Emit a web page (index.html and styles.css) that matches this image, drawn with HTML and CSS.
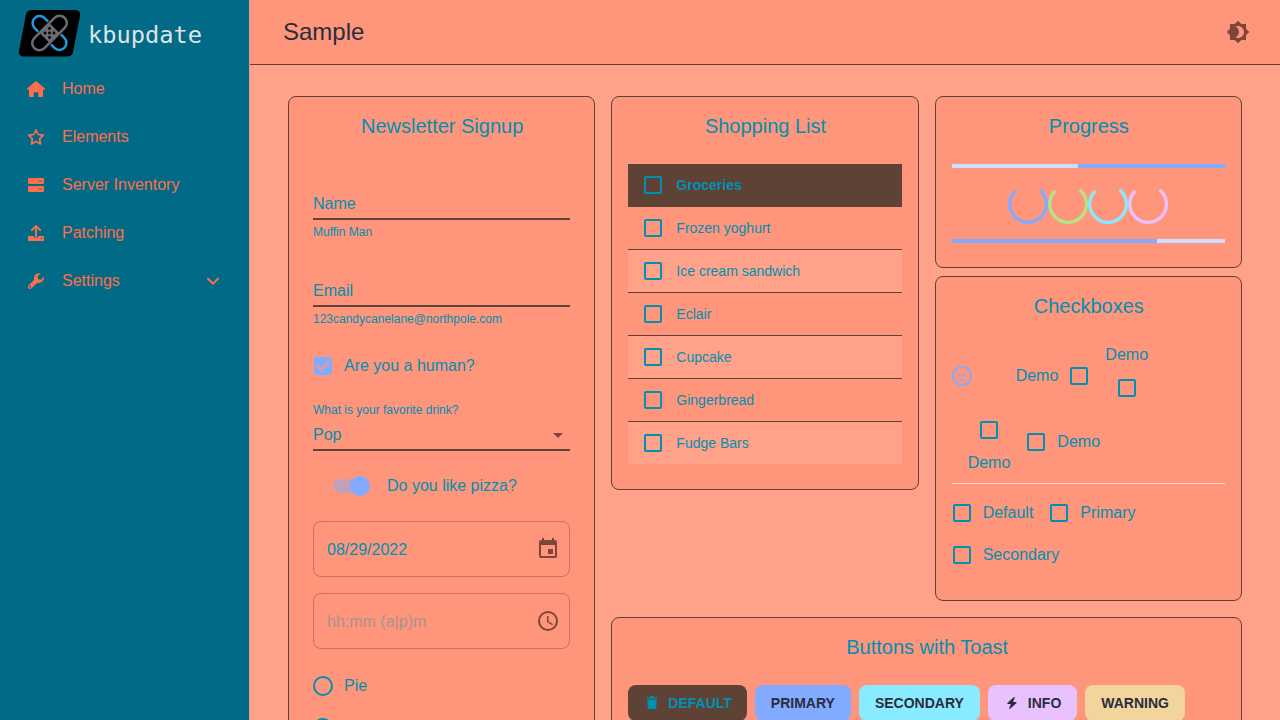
FILE: index.html
```html
<!DOCTYPE html>
<html lang="en">
<head>
<meta charset="utf-8">
<title>kbupdate</title>
<link rel="stylesheet" href="styles.css">
</head>
<body>
<svg class="defs" width="0" height="0">
  <symbol id="box" viewBox="0 0 24 24"><path d="M19 5v14H5V5h14m0-2H5c-1.1 0-2 .9-2 2v14c0 1.1.9 2 2 2h14c1.1 0 2-.9 2-2V5c0-1.1-.9-2-2-2z"/></symbol>
  <symbol id="ring" viewBox="0 0 24 24"><circle cx="12" cy="12" r="9" fill="none" stroke="currentColor" stroke-width="2"/></symbol>
  <symbol id="spin" viewBox="0 0 44 44"><path d="M34.800 6.300A20.200 20.200 0 1 1 8 7.500" fill="none" stroke="currentColor" stroke-width="3.600"/></symbol>
</svg>
<div class="app">
  <aside class="sidebar">
    <div class="brand">
      <svg class="brand-mark" width="65" height="50" viewBox="0 0 65 50">
        <path d="M14.500 2H58q6 0 5 6l-7 36q-1 4.500-6 4.500H7q-6 0-5-6L9 6.500Q10 2 14.500 2z" fill="#000"/>
        <g fill="none" stroke-width="2.500">
          <g transform="rotate(45 32.500 25)" stroke="#2299dc">
            <path d="M23.500 18h-5a7 7 0 0 0 0 14h5M41.500 18h5a7 7 0 0 1 0 14h-5"/>
          </g>
          <g transform="rotate(-45 32.500 25)" stroke="#6c6b71">
            <rect x="11" y="17.800" width="43" height="14.400" rx="7.200" fill="#000"/>
            <rect x="25.500" y="18" width="14" height="14" fill="#6c6b71" stroke="none"/>
          </g>
        </g>
        <g fill="#000"><circle cx="32.500" cy="20.500" r="1.400"/><circle cx="28" cy="25" r="1.400"/><circle cx="32.500" cy="25" r="1.400"/><circle cx="37" cy="25" r="1.400"/><circle cx="32.500" cy="29.500" r="1.400"/></g>
      </svg>
      <span class="brand-name">kbupdate</span>
    </div>
    <nav class="nav">
      <a class="nav-item"><svg viewBox="0 0 20 20"><path d="M10 2 1 9.500Q.8 10.800 2 10.800H3V17q0 1 1 1h3.700v-3.700q0-1 1-1h2.600q1 0 1 1V18H16q1 0 1-1v-6.200h1q1.200 0 1-1.300z"/></svg><span>Home</span></a>
      <a class="nav-item"><svg viewBox="0 0 20 20"><path d="M10 3 12.200 7.500 17.300 8.200 13.600 11.800 14.500 17 10 14.500 5.500 17 6.400 11.800 2.700 8.200 7.800 7.500z" fill="none" stroke="currentColor" stroke-width="1.700" stroke-linejoin="round"/></svg><span>Elements</span></a>
      <a class="nav-item"><svg viewBox="0 0 20 20"><rect x="2" y="3" width="16" height="6" rx="1"/><rect x="2" y="11" width="16" height="6" rx="1"/><path d="M12 5h4v2h-4zM12 13h4v2h-4z" fill="#a86f62"/></svg><span>Server Inventory</span></a>
      <a class="nav-item"><svg viewBox="0 0 20 20"><path d="M3 13h4.500q.5 2 2.500 2t2.500-2H17q1 0 1 1v3q0 1-1 1H3q-1 0-1-1v-3q0-1 1-1z"/><path d="M10 13.500V3.500M5.800 7.200 10 3l4.200 4.200" fill="none" stroke="currentColor" stroke-width="1.900" stroke-linecap="round"/><circle cx="15.500" cy="15.500" r=".8" fill="#006a87"/></svg><span>Patching</span></a>
      <a class="nav-item"><svg viewBox="0 0 20 20"><path d="M17.700 5.800 14.800 8.700 12.200 8.200 11.500 5.300 14.500 2.400C12 1.500 8.600 3 8 6.500c-.1.900 0 1.600.2 2.200L2.700 14.200c-1 1-.9 2.300-.2 3.100.9.900 2.300.9 3.200 0l5.600-5.600C15 12.800 19 9.500 17.700 5.800zM4 16.600a.9.900 0 1 1 0-1.800.9.900 0 0 1 0 1.800z"/></svg><span>Settings</span>
        <svg class="chevron" viewBox="0 0 14 14"><path d="M2 4.800 7 9.600 12 4.800" fill="none" stroke="currentColor" stroke-width="2" stroke-linecap="round"/></svg></a>
    </nav>
  </aside>
  <div class="content">
    <header class="topbar">
      <h1>Sample</h1>
      <svg class="icon brown" viewBox="0 0 24 24"><path d="M20 8.690V4h-4.690L12 .69 8.690 4H4v4.690L.69 12 4 15.310V20h4.690L12 23.310 15.310 20H20v-4.690L23.310 12 20 8.690zM12 18c-.89 0-1.740-.2-2.500-.55C11.560 16.500 13 14.420 13 12s-1.440-4.500-3.500-5.450C10.260 6.200 11.110 6 12 6c3.310 0 6 2.690 6 6s-2.690 6-6 6z"/></svg>
    </header>
    <main class="board">
      <section class="card form">
        <h2>Newsletter Signup</h2>
        <div class="field"><div class="input">Name</div><div class="hint">Muffin Man</div></div>
        <div class="field second"><div class="input">Email</div><div class="hint">123candycanelane@northpole.com</div></div>
        <label class="check human"><span class="tick blue"><svg class="icon" viewBox="0 0 24 24"><path d="M19 3H5c-1.110 0-2 .9-2 2v14c0 1.100.89 2 2 2h14c1.110 0 2-.9 2-2V5c0-1.100-.89-2-2-2zm-9 14l-5-5 1.410-1.410L10 14.170l7.590-7.590L19 8l-9 9z"/></svg></span>Are you a human?</label>
        <div class="select">
          <div class="hint">What is your favorite drink?</div>
          <div class="input">Pop<svg class="icon brown" viewBox="0 0 24 24"><path d="M7 10l5 5 5-5z"/></svg></div>
        </div>
        <label class="pizza"><span class="switch"><span class="thumb"></span></span>Do you like pizza?</label>
        <div class="picker"><span>08/29/2022</span><svg class="icon brown" viewBox="0 0 24 24"><path d="M17 12h-5v5h5v-5zM16 1v2H8V1H6v2H5c-1.110 0-1.990.9-1.990 2L3 19c0 1.100.89 2 2 2h14c1.100 0 2-.9 2-2V5c0-1.100-.9-2-2-2h-1V1h-2zm3 18H5V8h14v11z"/></svg></div>
        <div class="picker"><span class="placeholder">hh:mm (a|p)m</span><svg class="icon brown" viewBox="0 0 24 24"><circle cx="12" cy="12" r="9" fill="none" stroke="currentColor" stroke-width="2"/><path d="M12.500 7H11v6l5.250 3.150.75-1.230-4.500-2.670z"/></svg></div>
        <div class="radios">
          <label class="check"><span class="tick"><svg class="icon"><use href="#ring"/></svg></span>Pie</label>
          <label class="check"><span class="tick"><svg class="icon"><use href="#ring"/></svg></span></label>
        </div>
      </section>
      <div class="right">
        <div class="pair">
          <section class="card list">
            <h2>Shopping List</h2>
            <div class="table">
              <div class="row head"><svg class="icon"><use href="#box"/></svg>Groceries</div>
              <div class="row"><svg class="icon"><use href="#box"/></svg>Frozen yoghurt</div>
              <div class="row"><svg class="icon"><use href="#box"/></svg>Ice cream sandwich</div>
              <div class="row"><svg class="icon"><use href="#box"/></svg>Eclair</div>
              <div class="row"><svg class="icon"><use href="#box"/></svg>Cupcake</div>
              <div class="row"><svg class="icon"><use href="#box"/></svg>Gingerbread</div>
              <div class="row"><svg class="icon"><use href="#box"/></svg>Fudge Bars</div>
            </div>
          </section>
          <div class="stack">
            <section class="card progress">
              <h2>Progress</h2>
              <div class="bar reverse"><span style="width:53.800%"></span></div>
              <div class="spinners">
                <svg class="blue"><use href="#spin"/></svg><svg class="green"><use href="#spin"/></svg><svg class="cyan"><use href="#spin"/></svg><svg class="pink"><use href="#spin"/></svg>
              </div>
              <div class="bar"><span style="width:75%"></span></div>
            </section>
            <section class="card boxes">
              <h2>Checkboxes</h2>
              <div class="placements">
                <span class="tick face blue"><svg class="icon" viewBox="0 0 24 24"><circle cx="12" cy="12" r="9.200" fill="none" stroke="currentColor" stroke-width="1.800"/><path d="M7.200 9 11.500 11 10.800 12.200Q8.600 13.200 8.300 10.800zM16.800 9 12.500 11 13.200 12.200Q15.400 13.200 15.700 10.800z"/><path d="M9.200 17.200q2.800-2.500 5.600 0" fill="none" stroke="currentColor" stroke-width="1.600"/></svg></span>
                <label class="check start">Demo<span class="tick"><svg class="icon"><use href="#box"/></svg></span></label>
                <label class="check vertical">Demo<span class="tick"><svg class="icon"><use href="#box"/></svg></span></label>
              </div>
              <div class="placements">
                <label class="check vertical"><span class="tick"><svg class="icon"><use href="#box"/></svg></span>Demo</label>
                <label class="check"><span class="tick"><svg class="icon"><use href="#box"/></svg></span>Demo</label>
              </div>
              <hr>
              <div class="placements wrap">
                <label class="check"><span class="tick"><svg class="icon"><use href="#box"/></svg></span>Default</label>
                <label class="check"><span class="tick"><svg class="icon"><use href="#box"/></svg></span>Primary</label>
                <label class="check"><span class="tick"><svg class="icon"><use href="#box"/></svg></span>Secondary</label>
              </div>
            </section>
          </div>
        </div>
        <section class="card toast">
          <h2>Buttons with Toast</h2>
          <div class="buttons">
            <button class="btn default"><svg viewBox="0 0 16 16"><path d="M2.500 2.200h3.300L6.500 1h3l.7 1.200h3.300v1.300h-11zM3.200 4.500h9.600L12.200 13q-.1 1-1.200 1H5q-1.100 0-1.200-1z"/></svg>DEFAULT</button>
            <button class="btn primary">PRIMARY</button>
            <button class="btn secondary">SECONDARY</button>
            <button class="btn info"><svg viewBox="0 0 16 16"><path d="M10 2 3.300 8Q3 8.800 3.800 8.900H6.800l-1.700 4.600q.3.800 1 .3L12.500 8q.3-.8-.5-.9H9.100l1.700-4.600Q10.700 1.800 10 2z"/></svg>INFO</button>
            <button class="btn warning">WARNING</button>
          </div>
        </section>
      </div>
    </main>
  </div>
</div>
</body>
</html>
```

FILE: styles.css
```css
* { box-sizing: border-box; }
body {
  margin: 0;
  font: 300 16px/24px "Liberation Sans", Arial, sans-serif;
  color: #0090b3;
  background: #ffa289;
}
.defs { display: none; }
svg { fill: currentColor; flex: none; }
.icon { width: 24px; height: 24px; display: block; }
.brown { color: #7b4838; }
.blue { color: #82aaff; }
.green { color: #b4e486; }
.cyan { color: #89ebff; }
.pink { color: #e9c1ff; }

.app { display: flex; height: 720px; overflow: hidden; }
.sidebar { width: 250px; flex: none; background: #006a87; border-right: 1px solid #d4a094; }
.brand { height: 64px; display: flex; align-items: center; padding: 2px 0 0 17px; }
.brand-mark { margin-right: 6px; }
.brand-name { padding-top: 3px; font: 200 23.700px/30px "DejaVu Sans Mono", monospace; color: #dfe3e6; }
.nav-item { display: flex; align-items: center; height: 48px; padding: 0 29px 0 26px; color: #ff6e4a; }
.nav-item span { padding-top: 2px; }
.nav-item > svg:first-child { width: 20px; height: 20px; margin: 2px 16px 0 0; }
.nav-item .chevron { width: 14px; height: 14px; margin: 1px 0 0 auto; }

.content { flex: 1; min-width: 0; }
.topbar {
  height: 65px;
  display: flex;
  align-items: center;
  justify-content: space-between;
  padding: 0 30px 0 33px;
  background: #ff957a;
  border-bottom: 1px solid #5d4235;
}
.topbar h1 { margin: 0; font-size: 24px; line-height: 32px; font-weight: 400; color: #292d3e; }

.board { display: flex; gap: 16px; align-items: flex-start; padding: 31px 38px 0; }
.card { background: #ff957a; border: 1px solid #5d4235; border-radius: 8px; padding: 0 16px; }
.card h2 { margin: 0; height: 58px; padding-left: 1px; font-size: 20px; line-height: 58px; font-weight: 300; text-align: center; }
.form { width: 307.330px; flex: none; height: 900px; padding: 0 24px; }
.right { flex: 1; display: flex; flex-direction: column; gap: 16px; }
.pair { display: grid; grid-template-columns: 1fr 1fr; gap: 16px; align-items: start; }
.stack { display: flex; flex-direction: column; gap: 8px; }

.field { padding-top: 37px; }
.field.second { padding-top: 39px; }
.input { height: 28px; line-height: 23px; border-bottom: 2px solid #5d4235; }
.hint { font-size: 12px; height: 17px; line-height: 19px; }
.field .hint { margin-top: 3px; }
.check { display: flex; align-items: center; margin: 0 16px 0 -11px; }
.tick { width: 42px; height: 42px; padding: 9px; }
.human { margin-top: 18px; }
.select { margin-top: 14px; }
.select .input { display: flex; justify-content: space-between; margin-top: 5px; }
.pizza { display: flex; align-items: center; height: 38px; margin-top: 16px; padding-left: 20px; }
.switch { width: 34px; height: 14px; border-radius: 7px; background: #c1a0bb; margin-right: 20px; display: flex; align-items: center; }
.thumb { flex: none; width: 20px; height: 20px; margin-left: 17px; border-radius: 50%; background: #82aaff; }
.picker {
  display: flex; align-items: center; justify-content: space-between;
  height: 56px; margin-top: 16px; padding: 0 9px 0 13px;
  border: 1px solid #ca725d; border-radius: 8px;
}
.picker span { padding-top: 2px; }
.placeholder { color: #a8948e; }
.radios { margin-top: 16px; }

.table { margin: 9px 0 24px; font-size: 14px; }
.row { display: flex; align-items: center; gap: 11px; height: 43px; padding-left: 13px; border-bottom: 1px solid #5d4235; }
.row:nth-child(odd) { background: #ffa289; }
.row:nth-child(odd).head { background: #5d4235; font-weight: 700; }
.row:last-child { border-bottom-color: #ff957a; }

.progress { height: 172px; }
.bar { display: flex; height: 4px; background: #cdddff; }
.progress h2 + .bar { margin-top: 9px; }
.bar span { background: #82aaff; }
.reverse { justify-content: flex-end; }
.spinners { display: flex; justify-content: center; margin: 16px 0 15px; }
.spinners svg { width: 40px; height: 40px; }
.boxes { height: 325px; }
.boxes h2 { margin-bottom: 8px; }
.placements { display: flex; align-items: center; }
.face { margin: 0 17px 0 -11px; }
.start { margin: 0 -11px 0 16px; }
.vertical { flex-direction: column; margin: 0 16px; }
.wrap { flex-wrap: wrap; }
.boxes hr { height: 1px; border: 0; margin: 8px 0; background: #ffd5ca; }

.toast { height: 200px; }
.buttons { display: flex; gap: 8px; margin-top: 9px; }
.btn {
  display: flex; align-items: center; height: 36px; padding: 0 16px;
  border: 0; border-radius: 8px; color: #292d3e;
  font: 700 14px/24px "Liberation Sans", Arial, sans-serif;
}
.btn svg { width: 16px; height: 16px; margin-right: 8px; }
.btn.default { padding-right: 15px; background: #5d4235; color: #0090b3; }
.btn.primary { background: #82aaff; }
.btn.secondary { background: #89ebff; }
.btn.info { background: #e9c1ff; }
.btn.warning { background: #f2d59c; }
```
